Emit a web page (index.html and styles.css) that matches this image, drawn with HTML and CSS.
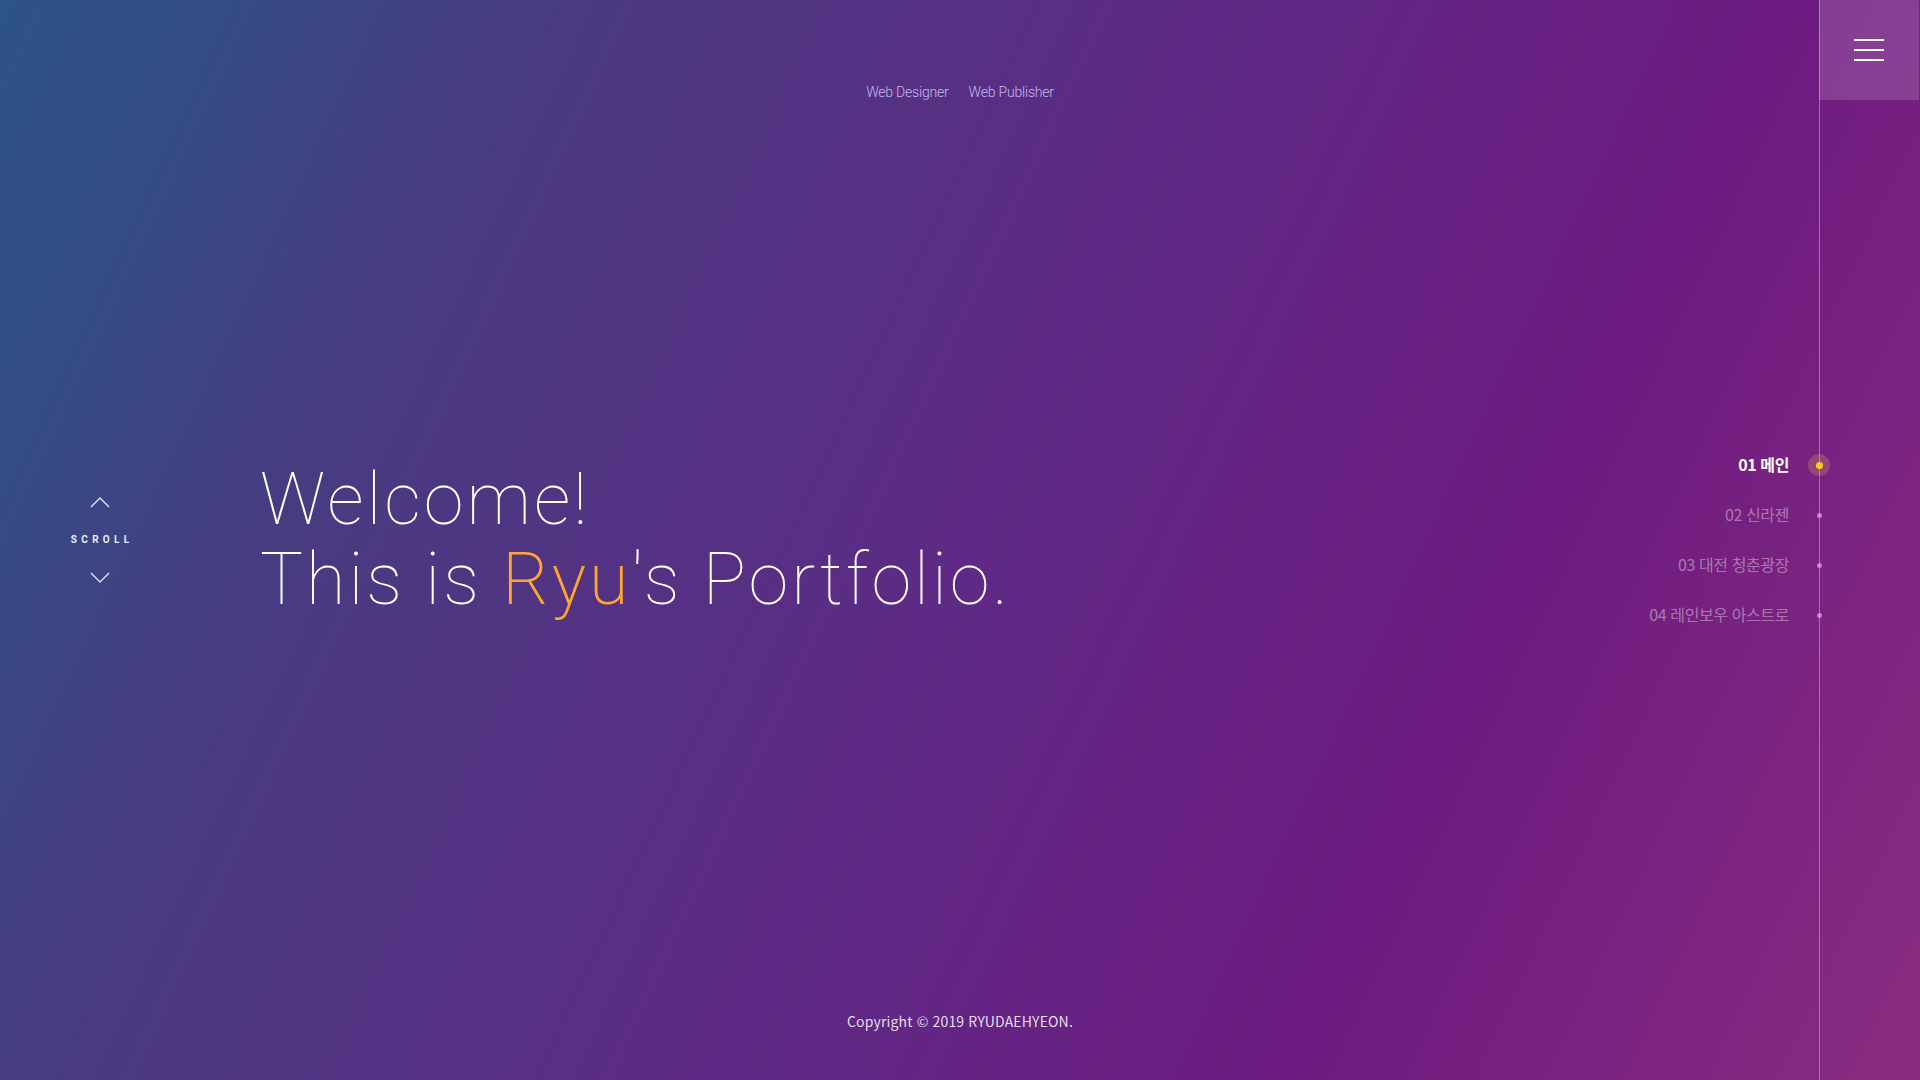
FILE: index.html
```html
<!DOCTYPE html>
<html lang="ko">
<head>
<meta charset="utf-8">
<title>Ryu's Portfolio</title>
<link rel="stylesheet" href="styles.css">
</head>
<body>
<div class="page">
  <header class="top-nav">
    <a class="top-link" href="#">Web Designer</a>
    <a class="top-link" href="#">Web Publisher</a>
  </header>

  <main class="hero">
    <div class="scroll">
      <svg class="chev" width="20" height="11" viewBox="0 0 20 11"><path d="M1 10 L10 1 L19 10" fill="none" stroke="#e4e6f5" stroke-width="1.3"/></svg>
      <span class="scroll-label">SCROLL</span>
      <svg class="chev" width="20" height="11" viewBox="0 0 20 11"><path d="M1 1 L10 10 L19 1" fill="none" stroke="#e4e6f5" stroke-width="1.3"/></svg>
    </div>

    <h1 class="title">Welcome!<br>This is <span class="accent">Ryu</span>'s Portfolio.</h1>

    <nav class="section-nav">
      <a class="sec-item active" href="#"><span class="sec-text">01 메인</span><span class="dot"></span></a>
      <a class="sec-item" href="#"><span class="sec-text">02 신라젠</span><span class="dot"></span></a>
      <a class="sec-item" href="#"><span class="sec-text">03 대전 청춘광장</span><span class="dot"></span></a>
      <a class="sec-item" href="#"><span class="sec-text">04 레인보우 아스트로</span><span class="dot"></span></a>
    </nav>
  </main>

  <footer class="footer">Copyright © 2019 RYUDAEHYEON.</footer>

  <aside class="sidebar">
    <button class="menu-btn" aria-label="menu">
      <span class="bar"></span><span class="bar"></span><span class="bar"></span>
    </button>
  </aside>
</div>
</body>
</html>
```
FILE: styles.css
```css
html, body {
  margin: 0;
  padding: 0;
  width: 1920px;
  height: 1080px;
  overflow: hidden;
}

body {
  font-family: Roboto, "Noto Sans CJK KR", sans-serif;
  background: linear-gradient(115deg, #2d5387 0%, #364b85 10%, #473c81 21%, #5e2a85 50%, #6d1b80 74%, #8a2c80 100%);
  color: #fff;
}

.page {
  position: relative;
  width: 1920px;
  height: 1080px;
  display: grid;
  grid-template-rows: 184px 1fr 184px;
}

.top-nav {
  display: flex;
  justify-content: center;
  align-items: center;
  gap: 20px;
}

.top-link {
  font-family: Roboto, sans-serif;
  font-weight: 300;
  font-size: 14px;
  letter-spacing: -0.2px;
  color: #c0bcee;
  text-decoration: none;
}

.hero {
  display: flex;
  align-items: center;
}

.scroll {
  width: 200px;
  display: flex;
  flex-direction: column;
  align-items: center;
  gap: 26px;
}

.chev {
  display: block;
}

.scroll-label {
  font-family: Roboto, sans-serif;
  font-weight: 700;
  font-size: 10px;
  letter-spacing: 4.3px;
  margin-right: -4.3px;
  color: #e2ebff;
  line-height: 12px;
}

.title {
  margin: 0 0 0 60px;
  font-family: Roboto, sans-serif;
  font-weight: 100;
  font-size: 72px;
  line-height: 80px;
  letter-spacing: 3px;
  color: #fff;
}

.accent {
  color: #ffa630;
  font-weight: 200;
}

.section-nav {
  position: relative;
  z-index: 1;
  margin-left: auto;
  padding-right: 89px;
  display: flex;
  flex-direction: column;
  align-items: flex-end;
  gap: 28px;
}

.sec-item {
  display: flex;
  align-items: center;
  gap: 19px;
  text-decoration: none;
  height: 22px;
}

.sec-text {
  font-family: "Noto Sans CJK KR", sans-serif;
  font-size: 16px;
  color: rgba(255, 255, 255, 0.4);
  letter-spacing: -0.4px;
  position: relative;
  top: -1px;
}

.dot {
  width: 22px;
  height: 22px;
  margin-right: 1px;
  border-radius: 50%;
  display: flex;
  align-items: center;
  justify-content: center;
}

.dot::after {
  content: "";
  width: 5px;
  height: 5px;
  border-radius: 50%;
  background: rgba(255, 255, 255, 0.45);
}

.sec-item.active .sec-text {
  color: #fff;
  font-weight: 700;
}

.sec-item.active .dot {
  background: rgba(255, 200, 80, 0.22);
}

.sec-item.active .dot::after {
  width: 7px;
  height: 7px;
  background: #ffcc1a;
}

.footer {
  display: flex;
  justify-content: center;
  align-items: flex-end;
  padding-bottom: 49px;
  font-family: "Noto Sans CJK KR", sans-serif;
  font-size: 14px;
  letter-spacing: 0.15px;
  color: rgba(255, 255, 255, 0.85);
}

.sidebar {
  position: absolute;
  top: 0;
  right: 0;
  bottom: 0;
  width: 100px;
  border-left: 1px solid rgba(255, 255, 255, 0.35);
  pointer-events: none;
}

.menu-btn {
  width: 100px;
  height: 100px;
  margin-left: -1px;
  border: 0;
  padding: 0;
  background: rgba(255, 255, 255, 0.15);
  display: flex;
  flex-direction: column;
  align-items: center;
  justify-content: center;
  gap: 8px;
  pointer-events: auto;
}

.bar {
  display: block;
  width: 30px;
  height: 2px;
  background: #fff;
}
```
